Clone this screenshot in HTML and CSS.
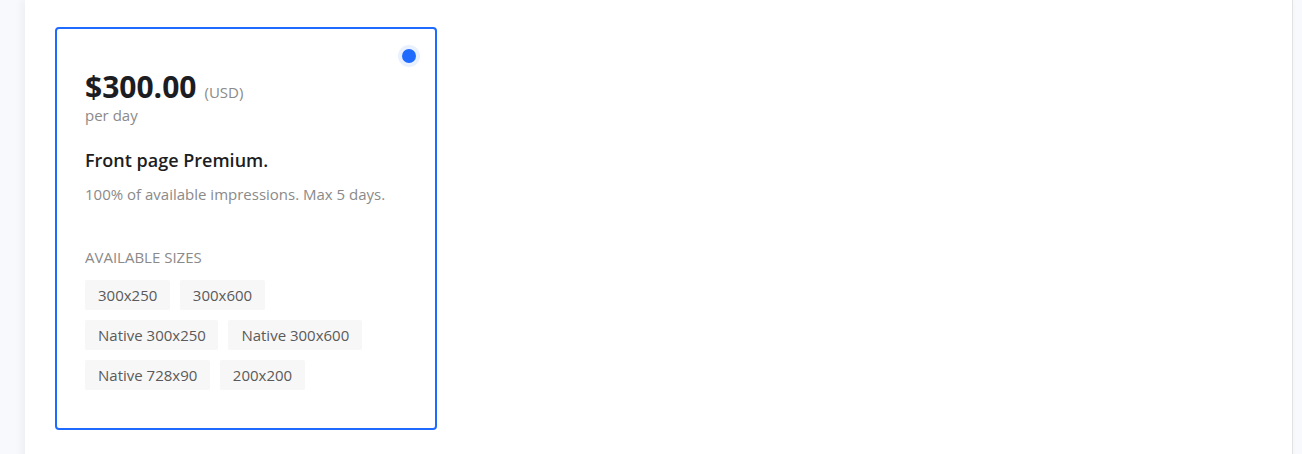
FILE: index.html
```html
<!DOCTYPE html>
<html lang="en">
<head>
<meta charset="utf-8">
<title>Plans</title>
<link rel="stylesheet" href="styles.css">
</head>
<body>
<div class="page">
  <main class="panel">
    <div class="card">
      <span class="radio"><span class="radio-dot"></span></span>
      <div class="price-row">
        <span class="price">$300.00</span>
        <span class="currency">(USD)</span>
      </div>
      <div class="period">per day</div>
      <h3 class="title">Front page Premium.</h3>
      <p class="desc">100% of available impressions. Max 5 days.</p>
      <div class="sizes-label">AVAILABLE SIZES</div>
      <div class="tags">
        <span class="tag">300x250</span>
        <span class="tag">300x600</span>
        <span class="tag">Native 300x250</span>
        <span class="tag">Native 300x600</span>
        <span class="tag">Native 728x90</span>
        <span class="tag">200x200</span>
      </div>
    </div>
  </main>
</div>
</body>
</html>
```
FILE: styles.css
```css
html, body {
  margin: 0;
  padding: 0;
  height: 100%;
  overflow: hidden;
}
body {
  background: #f8f9fc;
  font-family: "Open Sans", "Noto Sans", sans-serif;
}
.page {
  display: flex;
  padding-left: 25px;
  padding-right: 9px;
  height: 100%;
}
.panel {
  flex: 1;
  background: #ffffff;
  border-right: 1px solid #e2e2e2;
  box-shadow: -3px 0 8px rgba(30, 40, 80, 0.05);
  padding: 27px 30px;
  min-height: 600px;
}
.card {
  position: relative;
  box-sizing: border-box;
  width: 382px;
  height: 403px;
  border: 2px solid #1f6bff;
  border-radius: 4px;
  padding: 43px 28px 28px;
}
.radio {
  position: absolute;
  top: 16px;
  right: 15px;
  width: 22px;
  height: 22px;
  border-radius: 50%;
  background: #e9f0fe;
  display: flex;
  align-items: center;
  justify-content: center;
}
.radio-dot {
  width: 14px;
  height: 14px;
  border-radius: 50%;
  background: #1f6bff;
}
.price-row {
  display: flex;
  align-items: baseline;
  gap: 8px;
  line-height: 30px;
}
.price {
  font-size: 30px;
  font-weight: 700;
  color: #1c1d22;
}
.currency {
  font-size: 15px;
  color: #8a8a8a;
}
.period {
  font-size: 15px;
  color: #8a8a8a;
  line-height: 16px;
}
.title {
  margin: 25px 0 0;
  font-size: 18px;
  font-weight: 600;
  color: #1c1d22;
  line-height: 24px;
}
.desc {
  margin: 12px 0 0;
  font-size: 15px;
  line-height: 20px;
  color: #8a8a8a;
}
.sizes-label {
  margin-top: 43px;
  font-size: 15px;
  line-height: 20px;
  color: #8a8a8a;
}
.tags {
  display: flex;
  flex-wrap: wrap;
  gap: 10px;
  margin-top: 13px;
  width: 300px;
}
.tag {
  display: inline-flex;
  align-items: center;
  height: 30px;
  padding: 0 12.5px 0 13px;
  background: #f7f7f7;
  border-radius: 2px;
  font-size: 15px;
  color: #5a5a5a;
}
```
